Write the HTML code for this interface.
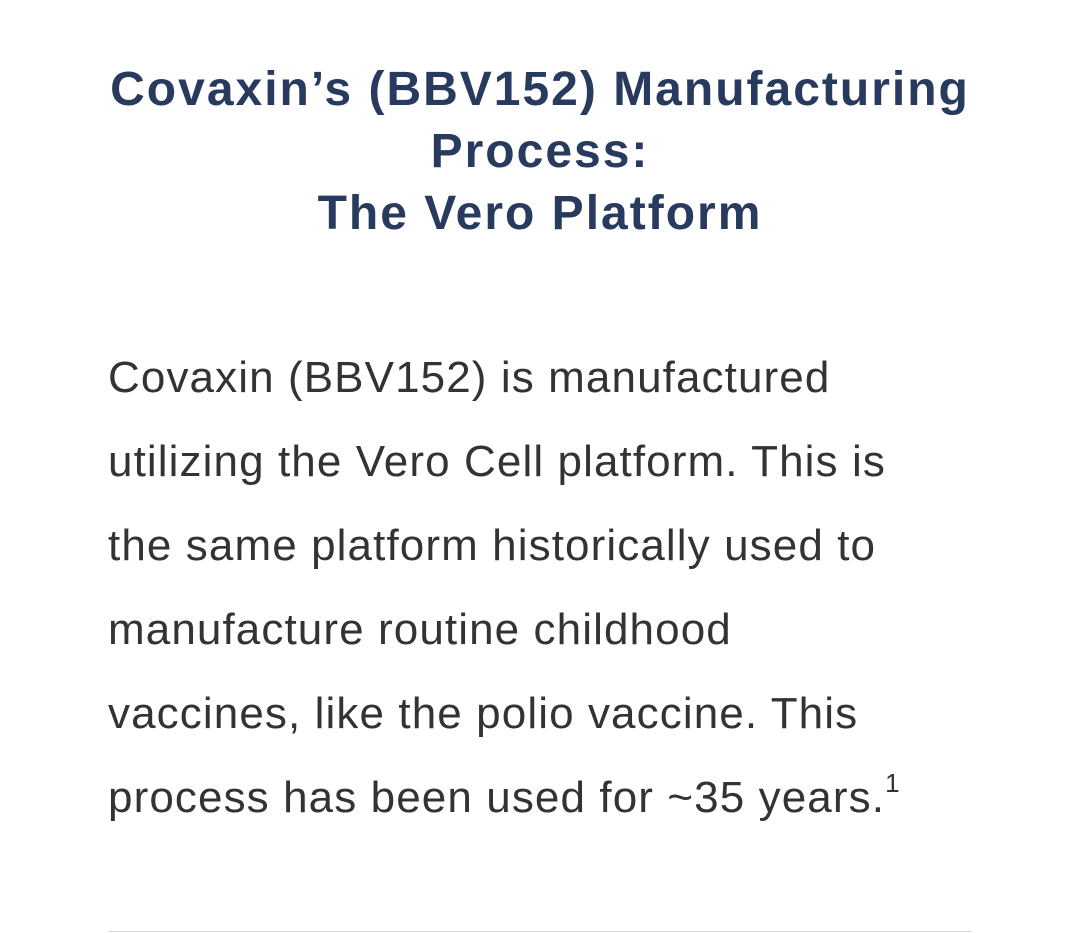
<!DOCTYPE html>
<html><head><meta charset="utf-8"><style>
html,body{margin:0;padding:0;background:#fff;width:1080px;height:933px;overflow:hidden}
h1{position:absolute;left:0;width:1080px;top:59px;margin:0;text-align:center;font-family:"Liberation Sans",sans-serif;font-weight:bold;font-size:48px;line-height:62px;color:#283a5e;letter-spacing:2px}
p{position:absolute;left:108px;top:336px;margin:0;font-family:"Liberation Sans",sans-serif;font-size:44px;line-height:84px;color:#333;letter-spacing:1.1px;white-space:nowrap}
.s{font-size:26px;position:relative;top:-20px}
.hr{position:absolute;left:108px;width:864px;top:931px;height:1px;background:#ddd}
</style></head><body>
<h1>Covaxin’s (BBV152) Manufacturing<br>Process:<br>The Vero Platform</h1>
<p>Covaxin (BBV152) is manufactured<br>utilizing the Vero Cell platform. This is<br>the same platform historically used to<br>manufacture routine childhood<br>vaccines, like the polio vaccine. This<br>process has been used for ~35 years.<span class="s">1</span></p>
<div class="hr"></div>
</body></html>
